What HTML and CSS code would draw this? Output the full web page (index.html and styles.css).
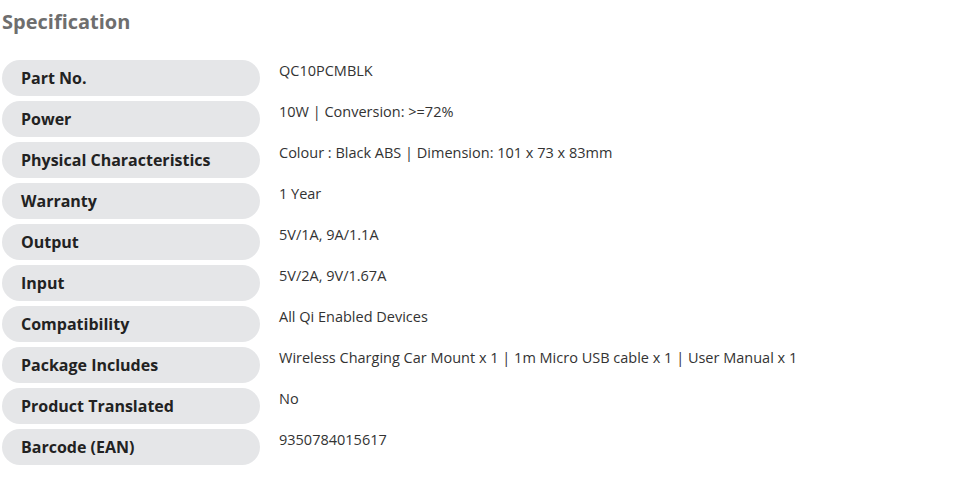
FILE: index.html
```html
<!DOCTYPE html>
<html lang="en">
<head>
    <meta charset="UTF-8">
    <title>Specification</title>
    <link rel="stylesheet" href="styles.css">
</head>
<body>
    <div class="spec">
        <h2>Specification</h2>
        <div class="spec-table">
            <div class="spec-row"><div class="spec-label">Part No.</div><div class="spec-value">QC10PCMBLK</div></div>
            <div class="spec-row"><div class="spec-label">Power</div><div class="spec-value">10W | Conversion: &gt;=72%</div></div>
            <div class="spec-row"><div class="spec-label">Physical Characteristics</div><div class="spec-value">Colour : Black ABS | Dimension: 101 x 73 x 83mm</div></div>
            <div class="spec-row"><div class="spec-label">Warranty</div><div class="spec-value">1 Year</div></div>
            <div class="spec-row"><div class="spec-label">Output</div><div class="spec-value">5V/1A, 9A/1.1A</div></div>
            <div class="spec-row"><div class="spec-label">Input</div><div class="spec-value">5V/2A, 9V/1.67A</div></div>
            <div class="spec-row"><div class="spec-label">Compatibility</div><div class="spec-value">All Qi Enabled Devices</div></div>
            <div class="spec-row"><div class="spec-label">Package Includes</div><div class="spec-value">Wireless Charging Car Mount x 1 | 1m Micro USB cable x 1 | User Manual x 1</div></div>
            <div class="spec-row"><div class="spec-label">Product Translated</div><div class="spec-value">No</div></div>
            <div class="spec-row"><div class="spec-label">Barcode (EAN)</div><div class="spec-value">9350784015617</div></div>
        </div>
    </div>
</body>
</html>
```

FILE: styles.css
```css
body {
    margin: 0;
    background: #fff;
    font-family: "Open Sans", Arial, sans-serif;
}
.spec {
    padding: 10px 0 0 2px;
}
h2 {
    margin: 0 0 26px 0;
    font-family: "Open Sans", Arial, sans-serif;
    font-size: 20px;
    font-weight: bold;
    color: #6e6e6e;
    line-height: 24px;
}
.spec-table {
    display: flex;
    flex-direction: column;
    gap: 5px;
}
.spec-row {
    display: grid;
    grid-template-columns: 258px 1fr;
    column-gap: 19px;
}
.spec-label {
    background: #e5e6e8;
    border-radius: 18px;
    height: 36px;
    line-height: 36px;
    padding-left: 19px;
    font-size: 16px;
    font-weight: bold;
    color: #222;
}
.spec-value {
    font-family: "Open Sans", Arial, sans-serif;
    font-size: 14.5px;
    line-height: 20px;
    padding-top: 1px;
    color: #333;
}
```
